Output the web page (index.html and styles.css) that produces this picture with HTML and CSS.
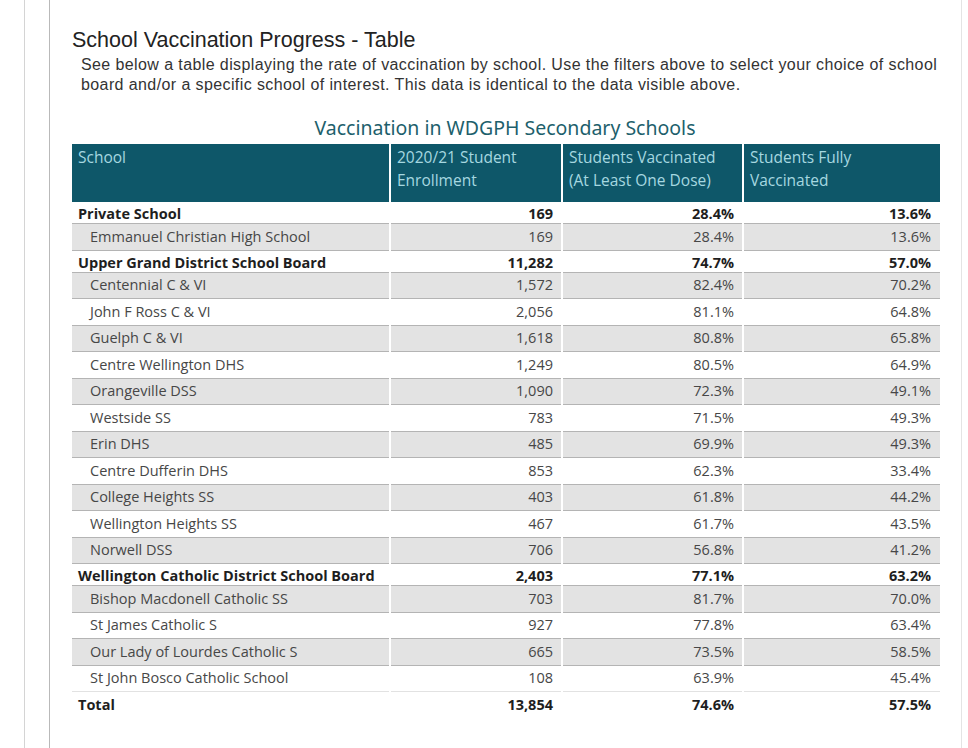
FILE: index.html
```html
<!DOCTYPE html>
<html lang="en">
<head>
<meta charset="utf-8">
<title>School Vaccination Progress - Table</title>
<link rel="stylesheet" href="styles.css">
</head>
<body>
<div class="frame">
  <div class="panel">
    <h2 class="heading">School Vaccination Progress - Table</h2>
    <p class="intro">See below a table displaying the rate of vaccination by school. Use the filters above to select your choice of school board and/or a specific school of interest. This data is identical to the data visible above.</p>
    <div class="visual">
      <div class="visual-title">Vaccination in WDGPH Secondary Schools</div>
      <table class="grid">
        <colgroup>
          <col class="c1"><col class="c2"><col class="c3"><col class="c4">
        </colgroup>
        <thead>
          <tr>
            <th>School</th>
            <th>2020/21 Student<br>Enrollment</th>
            <th>Students Vaccinated<br>(At Least One Dose)</th>
            <th>Students Fully<br>Vaccinated</th>
          </tr>
        </thead>
        <tbody>
          <tr class="board"><td>Private School</td><td>169</td><td>28.4%</td><td>13.6%</td></tr>
          <tr class="school alt"><td>Emmanuel Christian High School</td><td>169</td><td>28.4%</td><td>13.6%</td></tr>
          <tr class="board"><td>Upper Grand District School Board</td><td>11,282</td><td>74.7%</td><td>57.0%</td></tr>
          <tr class="school alt"><td>Centennial C &amp; VI</td><td>1,572</td><td>82.4%</td><td>70.2%</td></tr>
          <tr class="school"><td>John F Ross C &amp; VI</td><td>2,056</td><td>81.1%</td><td>64.8%</td></tr>
          <tr class="school alt"><td>Guelph C &amp; VI</td><td>1,618</td><td>80.8%</td><td>65.8%</td></tr>
          <tr class="school"><td>Centre Wellington DHS</td><td>1,249</td><td>80.5%</td><td>64.9%</td></tr>
          <tr class="school alt"><td>Orangeville DSS</td><td>1,090</td><td>72.3%</td><td>49.1%</td></tr>
          <tr class="school"><td>Westside SS</td><td>783</td><td>71.5%</td><td>49.3%</td></tr>
          <tr class="school alt"><td>Erin DHS</td><td>485</td><td>69.9%</td><td>49.3%</td></tr>
          <tr class="school"><td>Centre Dufferin DHS</td><td>853</td><td>62.3%</td><td>33.4%</td></tr>
          <tr class="school alt"><td>College Heights SS</td><td>403</td><td>61.8%</td><td>44.2%</td></tr>
          <tr class="school"><td>Wellington Heights SS</td><td>467</td><td>61.7%</td><td>43.5%</td></tr>
          <tr class="school alt"><td>Norwell DSS</td><td>706</td><td>56.8%</td><td>41.2%</td></tr>
          <tr class="board"><td>Wellington Catholic District School Board</td><td>2,403</td><td>77.1%</td><td>63.2%</td></tr>
          <tr class="school alt"><td>Bishop Macdonell Catholic SS</td><td>703</td><td>81.7%</td><td>70.0%</td></tr>
          <tr class="school"><td>St James Catholic S</td><td>927</td><td>77.8%</td><td>63.4%</td></tr>
          <tr class="school alt"><td>Our Lady of Lourdes Catholic S</td><td>665</td><td>73.5%</td><td>58.5%</td></tr>
          <tr class="school last"><td>St John Bosco Catholic School</td><td>108</td><td>63.9%</td><td>45.4%</td></tr>
          <tr class="board total"><td>Total</td><td>13,854</td><td>74.6%</td><td>57.5%</td></tr>
        </tbody>
      </table>
    </div>
  </div>
</div>
</body>
</html>
```
FILE: styles.css
```css
html, body {
  margin: 0;
  padding: 0;
  background: #ffffff;
}

.frame {
  margin-left: 24px;
  border-left: 1px solid #d4d4d4;
  padding-left: 24px;
  min-height: 748px;
  box-sizing: border-box;
}

.panel {
  width: 913px;
  min-height: 748px;
  border-left: 1px solid #b9b9b9;
  border-right: 1px solid #e4e4e4;
  padding: 28px 0 0 22px;
  box-sizing: border-box;
}

.heading {
  margin: 0;
  font-family: "Liberation Sans", Arial, sans-serif;
  font-weight: normal;
  font-size: 21.5px;
  line-height: 24px;
  color: #222222;
}

.intro {
  margin: 3px 0 0 9px;
  width: 866px;
  font-family: "Liberation Sans", Arial, sans-serif;
  font-size: 16px;
  letter-spacing: 0.4px;
  line-height: 20px;
  color: #333333;
}

.visual {
  margin-top: 21px;
  width: 866px;
}

.visual-title {
  text-align: center;
  font-family: "Noto Sans", sans-serif;
  font-size: 19.5px;
  line-height: 24px;
  color: #1d5f6c;
  margin-bottom: 4px;
}

.grid {
  width: 870px;
  margin-left: -2px;
  border-collapse: separate;
  border-spacing: 2px 0;
  table-layout: fixed;
  font-family: "Open Sans", sans-serif;
  font-size: 14.5px;
}

.c1 { width: 317px; }
.c2 { width: 170px; }
.c3 { width: 179px; }
.c4 { width: 196px; }

.grid th {
  background: #0e5769;
  color: #a6d8e0;
  font-weight: normal;
  font-size: 15.5px;
  text-align: left;
  vertical-align: top;
  line-height: 23px;
  height: 58px;
  box-sizing: border-box;
  padding: 2px 6px 10px 6px;
  white-space: nowrap;
}

.grid td {
  box-sizing: border-box;
  padding: 0 8px 0 6px;
  text-align: right;
  vertical-align: middle;
  white-space: nowrap;
  border-bottom: 1px solid #b4b4b4;
}

.grid td:last-child {
  padding-right: 9px;
}

.grid td:first-child {
  text-align: left;
}

.board td {
  height: 22px;
  font-weight: bold;
  color: #1e1e1e;
  line-height: 19px;
  padding-top: 2px;
}

.school td {
  height: 26.5px;
  color: #474747;
  line-height: 20px;
}

.school td:first-child {
  padding-left: 18px;
}

.alt td {
  background: #e3e3e3;
}

.last td {
  border-bottom-color: #e2e2e2;
}

.total td {
  border-bottom: none;
  height: 24px;
  padding-top: 0;
}
```
